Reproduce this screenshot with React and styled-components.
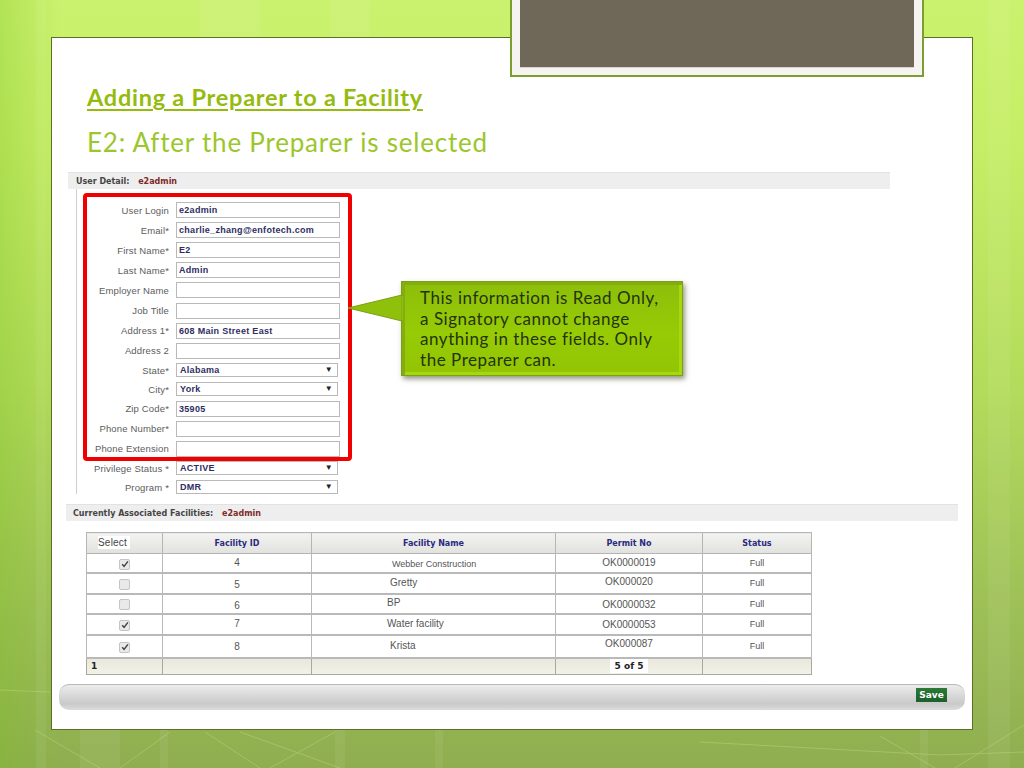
import React from "react";
import styled, { createGlobalStyle } from "styled-components";

const Global = createGlobalStyle`
  html, body {
    margin: 0;
    padding: 0;
  }
  body {
    width: 1024px;
    height: 768px;
    overflow: hidden;
    font-family: "Liberation Sans", Arial, sans-serif;
  }
`;

const Slide = styled.div`
  position: relative;
  width: 1024px;
  height: 768px;
  padding: 37px 51px 38px;
  box-sizing: border-box;
  background:
    linear-gradient(90deg, rgba(120, 190, 30, 0.3) 0, rgba(120, 190, 30, 0) 60px),
    linear-gradient(180deg, #cbf26e 0, #c6ee66 18%, #b4dc5c 50%, #9dbf57 80%, #8fae50 100%);
`;

const Streaks = styled.svg`
  position: absolute;
  left: 0;
  top: 0;
`;

const TitleTab = styled.div`
  position: absolute;
  left: 510px;
  top: 0;
  width: 414px;
  height: 77px;
  box-sizing: border-box;
  padding: 0 8px 8px;
  background: #f6f4f1;
  border: 2px solid #7b9e2f;
  border-top: none;
  z-index: 2;
`;

const TitleFill = styled.div`
  height: 100%;
  background: #6f6859;
  border-bottom: 1px solid #d8d4cc;
`;

const Frame = styled.div`
  position: relative;
  height: 693px;
  box-sizing: border-box;
  background: #fff;
  border: 1px solid #5b6f2a;
`;

const Heading = styled.h1`
  margin: 0;
  padding: 44px 0 0 35px;
  font: bold 23.5px/30px "Lato", sans-serif;
  letter-spacing: 0.75px;
  color: #94bb0e;
  text-decoration: underline;
  text-decoration-thickness: 2px;
  text-underline-offset: 3px;
`;

const Subheading = styled.h2`
  margin: 0;
  padding: 12px 0 0 35px;
  font: 400 26px/36px "Lato", sans-serif;
  letter-spacing: 0.79px;
  color: #9cc62c;
`;

const SectionBar = styled.div`
  height: 17px;
  margin: ${(p) => p.$margin};
  padding-left: ${(p) => p.$pad}px;
  background: #eeeeee;
  border-top: 1px solid #e2e2e2;
  box-sizing: border-box;
  font: bold 8px/18px "DejaVu Sans", sans-serif;
  color: #454545;
`;

const Owner = styled.span`
  margin-left: 6px;
  color: #7d2a2a;
`;

const DetailArea = styled.div`
  display: flex;
  align-items: flex-start;
`;

const FormPanel = styled.div`
  width: 277px;
  height: 305px;
  margin-left: 24px;
  padding-top: 4px;
  box-sizing: border-box;
  border-left: 1px solid #cfcfcf;
`;

const RedBox = styled.div`
  width: 269px;
  height: 268px;
  margin-left: 6px;
  padding-top: 3px;
  box-sizing: border-box;
  border: 4px solid #f00000;
  border-radius: 4px;
`;

const LowerRows = styled.div`
  margin-top: -2.5px;
  padding-left: 10px;
`;

const Row = styled.div`
  display: grid;
  grid-template-columns: 82px 164px;
  column-gap: 7px;
  align-items: center;
  height: ${(p) => (p.$select ? 19 : 20.1)}px;
`;

const Label = styled.label`
  text-align: right;
  font-size: 9.5px;
  letter-spacing: 0.15px;
  color: #5c5c5c;
  white-space: nowrap;
`;

const Field = styled.div`
  height: 16px;
  box-sizing: border-box;
  padding-left: 2px;
  background: #fff;
  border: 1px solid #b9b9b9;
  font: bold 9px/15px "Liberation Sans", sans-serif;
  letter-spacing: 0.3px;
  color: #2e2e63;
  white-space: nowrap;
`;

const SelectBox = styled(Field)`
  display: flex;
  justify-content: space-between;
  width: 162px;
  height: 14px;
  padding: 0 4px 0 3px;
  font-size: 9px;
  line-height: 13px;
`;

const Caret = styled.span`
  font-size: 8px;
  line-height: 11px;
  color: #222;
`;

const Callout = styled.div`
  position: relative;
  width: 282px;
  height: 95px;
  margin: 92px 0 0 48px;
  padding: 6px 0 0 18px;
  box-sizing: border-box;
  background: linear-gradient(180deg, #8dbe0b 0, #97cb05 55%, #92c404 100%);
  border: 1px solid #7c9f15;
  box-shadow:
    inset 3px 3px 0 #84ad12,
    inset -3px -3px 0 #a6d80e,
    2px 3px 5px rgba(60, 70, 30, 0.55);
  font: 400 17px/20.5px "Lato", sans-serif;
  letter-spacing: 0.55px;
  color: #24340a;
  white-space: nowrap;
`;

const Pointer = styled.svg`
  position: absolute;
  left: -54px;
  top: 13px;
  overflow: visible;
`;

const GridTable = styled.table`
  width: 726px;
  margin: 11px 0 0 34px;
  border-collapse: collapse;
  table-layout: fixed;
`;

const HeadCell = styled.th`
  height: 21px;
  padding: 2px 0 0;
  box-sizing: border-box;
  background: linear-gradient(180deg, #f3f3f1, #e1e1de);
  border: 1px solid #b5b5b5;
  font: bold 8px/1 "DejaVu Sans", sans-serif;
  color: #2a2a80;
`;

const SelectHead = styled.span`
  display: block;
  width: 32px;
  margin: -2px 0 2px 11px;
  padding: 1px 0;
  background: #fff;
  text-align: left;
  font: 400 10px/11px "Liberation Sans", sans-serif;
  letter-spacing: 0.2px;
  color: #444;
`;

const Cell = styled.td`
  height: ${(p) => p.$h}px;
  box-sizing: border-box;
  padding: ${(p) => (p.$nudge < 0 ? 0 : p.$nudge)}px 0 ${(p) => (p.$nudge < 0 ? -p.$nudge : 0)}px ${(p) => p.$indent || 0}px;
  border: 1px solid #b9b9b9;
  border-width: 1px 1px 2px;
  text-align: ${(p) => (p.$indent ? "left" : "center")};
  font-size: ${(p) => (p.$small ? 9 : 10)}px;
  line-height: 12px;
  color: #555;
`;

const Box = styled.span`
  display: inline-flex;
  align-items: center;
  justify-content: center;
  width: 9px;
  height: 9px;
  vertical-align: middle;
  background: #e9e9e9;
  border: 1px solid #c4c4c4;
  border-radius: 2px;
`;

const FootCell = styled.td`
  height: 17px;
  padding: 0 0 0 ${(p) => p.$pad || 0}px;
  box-sizing: border-box;
  background: linear-gradient(180deg, #e8e8dd, #f1f1e7);
  border: 1px solid #a9a9a0;
  font: bold 9px/1 "DejaVu Sans", sans-serif;
  color: #222;
  text-align: ${(p) => p.$align || "left"};
`;

const PageCount = styled.span`
  padding: 2px 5px;
  background: #fff;
`;

const SaveBar = styled.div`
  display: flex;
  justify-content: flex-end;
  align-items: flex-start;
  height: 26px;
  margin: 9px 7px 0;
  padding: 3px 18px 0 0;
  box-sizing: border-box;
  background: linear-gradient(180deg, #ececec, #c9c9c9 75%, #dcdcdc);
  border-top: 1px solid #b9b9b9;
  border-radius: 10px;
`;

const SaveButton = styled.button`
  width: 31px;
  height: 14px;
  padding: 0;
  background: linear-gradient(180deg, #2b7a38, #1c5f2b);
  border: none;
  font: bold 9px/14px "DejaVu Sans", sans-serif;
  color: #fff;
`;

const Check = ({ on }) => (
  <Box>
    {on && (
      <svg width="8" height="8" viewBox="0 0 8 8">
        <path d="M1.2 4.2 L3.1 6.4 L6.9 1.4" fill="none" stroke="#444" strokeWidth="1.5" />
      </svg>
    )}
  </Box>
);

const topRows = [
  ["User Login", "e2admin"],
  ["Email*", "charlie_zhang@enfotech.com"],
  ["First Name*", "E2"],
  ["Last Name*", "Admin"],
  ["Employer Name", ""],
  ["Job Title", ""],
  ["Address 1*", "608 Main Street East"],
  ["Address 2", ""],
  ["State*", "Alabama", true],
  ["City*", "York", true],
  ["Zip Code*", "35905"],
  ["Phone Number*", ""],
  ["Phone Extension", ""],
];

const lowerRows = [
  ["Privilege Status *", "ACTIVE", true],
  ["Program *", "DMR", true],
];

const facilities = [
  { on: true, id: "4", idNudge: 1, name: "Webber Construction", indent: 80, small: true, nameNudge: 2, permit: "OK0000019", permitNudge: 1, h: 19 },
  { on: false, id: "5", idNudge: 3, name: "Gretty", indent: 78, nameNudge: -1, permit: "OK000020", permitNudge: -3, h: 21 },
  { on: false, id: "6", idNudge: 5, name: "BP", indent: 75, nameNudge: -1, permit: "OK0000032", permitNudge: 2, h: 20 },
  { on: true, id: "7", idNudge: 0, name: "Water facility", indent: 75, nameNudge: -1, permit: "OK0000053", permitNudge: 2, h: 21 },
  { on: true, id: "8", idNudge: 1, name: "Krista", indent: 78, nameNudge: 0, permit: "OK000087", permitNudge: -4, h: 23 },
];

const FormRow = ({ label, value, select }) => (
  <Row $select={select}>
    <Label>{label}</Label>
    {select ? (
      <SelectBox>
        {value}
        <Caret>▼</Caret>
      </SelectBox>
    ) : (
      <Field>{value}</Field>
    )}
  </Row>
);

const App = () => {
  return (
    <Slide>
      <Global />
      <Streaks width="1024" height="768" viewBox="0 0 1024 768">
        <g fill="#fff" opacity="0.06">
          <rect x="36" y="0" width="10" height="768" />
          <rect x="988" y="0" width="22" height="768" />
          <rect x="80" y="730" width="40" height="38" />
          <rect x="160" y="730" width="8" height="38" />
          <rect x="335" y="730" width="10" height="38" />
          <rect x="435" y="730" width="8" height="38" />
          <rect x="920" y="730" width="8" height="38" />
          <rect x="200" y="0" width="60" height="37" />
          <rect x="330" y="0" width="40" height="37" />
        </g>
        <g stroke="#d8eaa0" strokeWidth="1" opacity="0.3" fill="none">
          <path d="M0 690 L50 692" />
          <path d="M35 730 L100 768" />
          <path d="M120 768 L170 732" />
          <path d="M205 732 L260 768" />
          <path d="M240 732 L340 768" />
          <path d="M270 768 L335 732" />
          <path d="M700 742 L940 755 L1024 752" />
          <path d="M880 736 L935 768" />
          <path d="M955 768 L1024 725" />
        </g>
      </Streaks>
      <TitleTab>
        <TitleFill />
      </TitleTab>
      <Frame>
        <Heading>Adding a Preparer to a Facility</Heading>
        <Subheading>E2: After the Preparer is selected</Subheading>
        <SectionBar $margin="12px 82px 0 16px" $pad={8}>
          User Detail: <Owner>e2admin</Owner>
        </SectionBar>
        <DetailArea>
          <FormPanel>
            <RedBox>
              {topRows.map(([label, value, select]) => (
                <FormRow key={label} label={label} value={value} select={select} />
              ))}
            </RedBox>
            <LowerRows>
              {lowerRows.map(([label, value, select]) => (
                <FormRow key={label} label={label} value={value} select={select} />
              ))}
            </LowerRows>
          </FormPanel>
          <Callout>
            <Pointer width="56" height="30" viewBox="0 0 56 30">
              <polygon points="0,13 54,0 54,26" fill="#8fc00c" stroke="#7c9f15" strokeWidth="1" />
              <polygon points="54,1 55,1 55,25 54,25" fill="#8fc00c" />
            </Pointer>
            This information is Read Only,
            <br />
            a Signatory cannot change
            <br />
            anything in these fields. Only
            <br />
            the Preparer can.
          </Callout>
        </DetailArea>
        <SectionBar $margin="10px 14px 0 14px" $pad={7}>
          Currently Associated Facilities: <Owner>e2admin</Owner>
        </SectionBar>
        <GridTable>
          <colgroup>
            <col width="76" />
            <col width="149" />
            <col width="244" />
            <col width="147" />
            <col width="109" />
          </colgroup>
          <thead>
            <tr>
              <HeadCell>
                <SelectHead>Select</SelectHead>
              </HeadCell>
              <HeadCell>Facility ID</HeadCell>
              <HeadCell>Facility Name</HeadCell>
              <HeadCell>Permit No</HeadCell>
              <HeadCell>Status</HeadCell>
            </tr>
          </thead>
          <tbody>
            {facilities.map((f) => (
              <tr key={f.id}>
                <Cell $h={f.h} $nudge={2}>
                  <Check on={f.on} />
                </Cell>
                <Cell $h={f.h} $nudge={f.idNudge}>{f.id}</Cell>
                <Cell $h={f.h} $nudge={f.nameNudge} $indent={f.indent} $small={f.small}>
                  {f.name}
                </Cell>
                <Cell $h={f.h} $nudge={f.permitNudge}>{f.permit}</Cell>
                <Cell $h={f.h} $nudge={0} $small>Full</Cell>
              </tr>
            ))}
            <tr>
              <FootCell $pad={4}>1</FootCell>
              <FootCell />
              <FootCell />
              <FootCell $align="center">
                <PageCount>5 of 5</PageCount>
              </FootCell>
              <FootCell />
            </tr>
          </tbody>
        </GridTable>
        <SaveBar>
          <SaveButton>Save</SaveButton>
        </SaveBar>
      </Frame>
    </Slide>
  );
};

export default App;
